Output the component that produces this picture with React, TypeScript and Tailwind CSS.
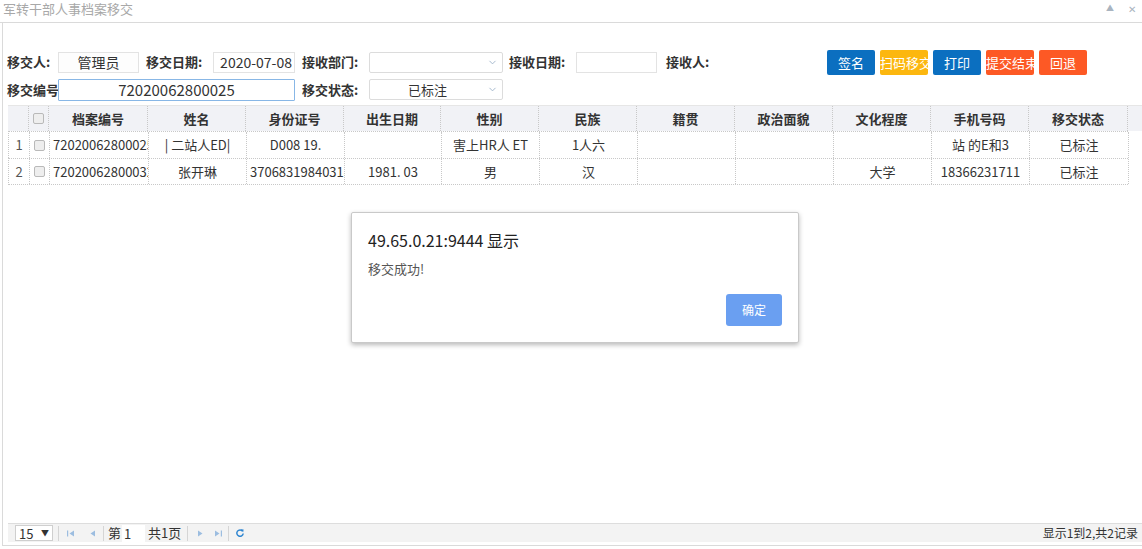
import { ChevronDown } from 'lucide-react';

const FONT = { fontFamily: '"Noto Sans CJK SC", "Noto Sans", sans-serif' };

const GRID = 'grid grid-cols-[21px_20px_99px_98px_98px_97px_98px_98px_98px_98px_98px_98px_99px]';

const headers = ['档案编号', '姓名', '身份证号', '出生日期', '性别', '民族', '籍贯', '政治面貌', '文化程度', '手机号码', '移交状态'];

const rows = [
  ['72020062800025', '| 二站人ED|', 'D008 19.', '', '害上HR人 ET', '1人六', '', '', '', '站 的E和3', '已标注'],
  ['72020062800032', '张开琳', '370683198403181', '1981. 03', '男', '汉', '', '', '大学', '18366231711', '已标注'],
];

function Box() {
  return <span className="inline-block w-[11px] h-[11px] border border-[#b9b9b9] bg-[#eeeeee] rounded-[2px]" />;
}

function Chevron() {
  return <ChevronDown className="w-[11px] h-[11px] text-[#9fb4c9]" strokeWidth={2} />;
}

function Btn({ label, bg }: { label: string; bg: string }) {
  return (
    <div className={`w-[48px] h-[25px] leading-[25px] text-center overflow-hidden whitespace-nowrap text-white text-[13px] rounded-[2px] ${bg}`}>
      {label}
    </div>
  );
}

function PagerIcon({ d }: { d: string }) {
  return (
    <svg width="9" height="9" viewBox="0 0 9 9" className="text-[#9cbde0]">
      <path d={d} fill="currentColor" />
    </svg>
  );
}

function Sep() {
  return <span className="block w-px h-[15px] bg-[#d5d5d5]" />;
}

export default function App() {
  return (
    <div className="relative w-[1142px] h-[549px] bg-white text-[#333] overflow-hidden flex flex-col" style={FONT}>
      {/* title bar */}
      <div className="h-[23px] flex items-center justify-between pl-[3px] pr-[6px] border-b border-[#dadada] shrink-0">
        <span className="text-[13px] text-[#a8a8a8] leading-none -mt-[6px]">军转干部人事档案移交</span>
        <div className="flex items-center gap-[14px] text-[#a9b4c0] text-[10px] -mt-[6px]">
          <span className="text-[8px]">▲</span>
          <span>✕</span>
        </div>
      </div>

      {/* panel */}
      <div className="ml-[2px] border-l border-[#dadada] flex flex-col h-[523px] shrink-0 border-b">
        {/* form */}
        <div className="pt-[26px] pl-[4px] flex flex-col gap-[3px] whitespace-nowrap">
          <div className="flex items-center h-[26px] text-[13px]">
            <span className="w-[51px] font-bold">移交人:</span>
            <div className="w-[81px] h-[21px] border border-[#e3e3e3] bg-[#fdfdfd] text-center text-[14px] leading-[19px]">管理员</div>
            <span className="ml-[7px] w-[67px] font-bold">移交日期:</span>
            <div className="w-[82px] h-[21px] border border-[#e3e3e3] text-right pr-[2px] text-[14px] leading-[19px]">2020-07-08</div>
            <span className="ml-[7px] w-[67px] font-bold">接收部门:</span>
            <div className="w-[134px] h-[21px] border border-[#dcdcdc] rounded-[2px] flex items-center justify-end pr-[4px]">
              <Chevron />
            </div>
            <span className="ml-[6px] w-[67px] font-bold">接收日期:</span>
            <div className="w-[81px] h-[21px] border border-[#e3e3e3]" />
            <span className="ml-[9px] w-[159px] font-bold">接收人:</span>
            <div className="flex gap-[5px] ml-[2px]">
              <Btn label="签名" bg="bg-[#0b6fc0]" />
              <Btn label="扫码移交" bg="bg-[#fcb70f]" />
              <Btn label="打印" bg="bg-[#0b6fc0]" />
              <Btn label="提交结束" bg="bg-[#fd5925]" />
              <Btn label="回退" bg="bg-[#fd5925]" />
            </div>
          </div>
          <div className="flex items-center h-[23px] text-[13px]">
            <span className="w-[51px] font-bold">移交编号</span>
            <div className="w-[237px] h-[22px] border border-[#88b7e6] rounded-[1px] text-center text-[15px] leading-[20px]">72020062800025</div>
            <span className="ml-[7px] w-[67px] font-bold">移交状态:</span>
            <div className="w-[134px] h-[21px] border border-[#dcdcdc] rounded-[2px] flex items-center justify-between pl-[38px] pr-[4px] text-[13px]">
              <span>已标注</span>
              <Chevron />
            </div>
          </div>
        </div>

        {/* datagrid */}
        <div className="mt-[4px] ml-[5px] flex-1 flex flex-col text-[13px]">
          <div className="flex h-[26px] bg-[#f1f2f6] border-t border-[#e6e6e6]">
            <div className={GRID}>
              <div className="border-r border-dotted border-[#c8c8c8]" />
              <div className="border-r border-dotted border-[#c8c8c8] flex items-center justify-center"><Box /></div>
              {headers.map((h) => (
                <div key={h} className="border-r border-dotted border-[#c8c8c8] flex items-center justify-center font-bold">{h}</div>
              ))}
            </div>
            <div className="flex-1" />
          </div>
          {rows.map((r, i) => (
            <div key={i} className={`${GRID} h-[27px] w-[1120px] border-l border-t border-dotted border-[#c8c8c8] ${i === rows.length - 1 ? 'border-b' : ''}`}>
              <div className="border-r border-dotted border-[#c8c8c8] flex items-center justify-center text-[#555]">{i + 1}</div>
              <div className="border-r border-dotted border-[#c8c8c8] flex items-center justify-center"><Box /></div>
              {r.map((c, j) => (
                <div key={j} className="border-r border-dotted border-[#c8c8c8] text-center overflow-hidden whitespace-nowrap leading-[26px] px-[3px]">{c}</div>
              ))}
            </div>
          ))}
          <div className="flex-1" />
          {/* pager */}
          <div className="h-[19px] bg-[#f3f3f3] border-t border-[#dddddd] flex items-center pl-[7px] pr-[4px] text-[13px] whitespace-nowrap">
            <div className="w-[38px] h-[16px] bg-white border border-[#cfcfcf] flex items-center justify-between px-[3px] text-[13px] leading-none">
              <span>15</span>
              <span className="text-[8px]">▼</span>
            </div>
            <div className="ml-[5px]"><Sep /></div>
            <div className="ml-[7px] flex items-center gap-[13px]">
              <PagerIcon d="M1 1.5h1.2v6H1z M8 1.5v6L3.5 4.5z" />
              <PagerIcon d="M7 1.5v6L2.5 4.5z" />
            </div>
            <div className="ml-[6px]"><Sep /></div>
            <span className="ml-[4px]">第</span>
            <div className="ml-[1px] w-[23px] h-[17px] bg-white leading-[17px] pl-[2px]">1</div>
            <span className="ml-[3px]">共1页</span>
            <div className="ml-[6px]"><Sep /></div>
            <div className="ml-[8px] flex items-center gap-[9px]">
              <PagerIcon d="M2 1.5v6L6.5 4.5z" />
              <PagerIcon d="M1 1.5v6L5.5 4.5z M6.8 1.5H8v6H6.8z" />
            </div>
            <div className="ml-[5px]"><Sep /></div>
            <svg width="10" height="10" viewBox="0 0 10 10" className="ml-[6px] text-[#2f86d1]">
              <path d="M7.6 3.2A3.2 3.2 0 1 0 8.2 5.5" fill="none" stroke="currentColor" strokeWidth="1.5" />
              <path d="M5.6 1.2L8.6 1.4 8.2 4.2z" fill="currentColor" />
            </svg>
            <span className="ml-auto text-[12px]">显示1到2,共2记录</span>
          </div>
          <div className="h-[3px]" />
        </div>
      </div>

      {/* alert dialog */}
      <div className="absolute left-[351px] top-[212px] w-[448px] h-[131px] bg-white border border-[#c9c9c9] rounded-[2px] shadow-[0_2px_5px_rgba(0,0,0,0.28)] px-[16px] pt-[17px] flex flex-col">
        <div className="text-[16px] text-[#222] leading-[20px]">49.65.0.21:9444 显示</div>
        <div className="mt-[10px] text-[13px] text-[#555] leading-[18px]">移交成功!</div>
        <div className="mt-auto mb-[16px] flex justify-end">
          <div className="w-[56px] h-[32px] rounded-[3px] bg-[#6a9ff1] text-white text-[12px] flex items-center justify-center">确定</div>
        </div>
      </div>
    </div>
  );
}
